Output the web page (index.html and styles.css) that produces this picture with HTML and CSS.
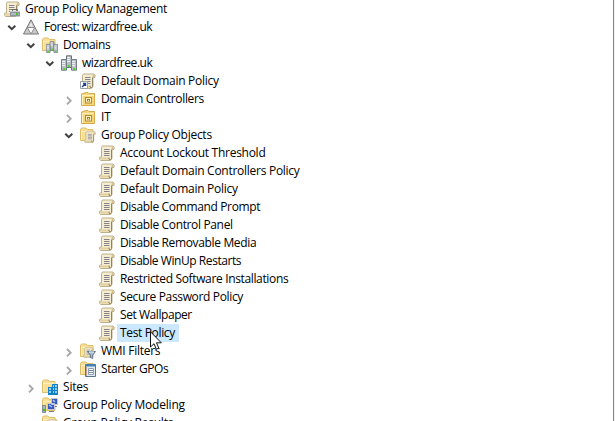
FILE: index.html
```html
<!DOCTYPE html>
<html lang="en">
<head>
<meta charset="utf-8">
<title>Group Policy Management</title>
<link rel="stylesheet" href="styles.css">
</head>
<body>
<svg class="defs" aria-hidden="true">
  <symbol id="open" viewBox="0 0 16 18"><path d="M4.300 7.700L7.800 11.200L11.300 7.700" fill="none" stroke="#404040" stroke-width="2"/></symbol>
  <symbol id="closed" viewBox="0 0 16 18"><path d="M6 7l3.700 3.700L6 14.400" fill="none" stroke="#a6a6a6" stroke-width="1.800"/></symbol>
  <symbol id="scroll" viewBox="0 0 16 16">
    <path d="M4 1H14Q15.800 1.500 15 4.500H13V13Q12.800 15.300 10.500 15.500H1.500Q0 14.500 .8 12H2.500V2.500Q2.700 1 4 1Z" fill="#f6edcf" stroke="#b5a781" stroke-width=".9"/>
    <path d="M12.500 4Q12.300 2 13.500 1.500L14.500 2V4Z" fill="#d2c08a"/>
    <path d="M1 12.500H10V14.500H2Z" fill="#e0d09d"/>
    <path d="M12.500 4.500V13.500Q12 15 10.500 15L10 12.500" fill="none" stroke="#8f8461"/>
    <path d="M5 4.500H10.500M5 6.500H10.500M5 8.500H10.500M5 10.500H10.500" stroke="#83838f"/>
  </symbol>
  <symbol id="folder" viewBox="0 0 16 16">
    <path d="M.5 2.500L1.500 1H6L7.500 2.500H13V13.500H.5Z" fill="#f8df95" stroke="#dfbd69"/>
    <path d="M1 4.500H12.500" stroke="#fff0c2"/>
    <path d="M1.500 5V13" stroke="#fdedbb"/>
  </symbol>
  <symbol id="servers" viewBox="0 0 16 16">
    <path d="M5.500 .8H10.500V12.500H5.500Z" fill="#b7bfc5" stroke="#687178"/>
    <path d="M.5 4.500H5.500V15.200H.5ZM10.500 4.500H15.500V15.200H10.500Z" fill="#b7bfc5" stroke="#727c84"/>
    <path d="M6 2.500H9M6 4.500H9M6 6.500H9M1 6.500H4M1 8.500H4M1 10.500H4M11 6.500H14M11 8.500H14M11 10.500H14" stroke="#eef2f4"/>
    <path d="M7 10h2v2H7zM2 13h2v2H2zM12 13h2v2H12z" fill="#55d42e"/>
  </symbol>
  <symbol id="console" viewBox="0 0 16 16">
    <use href="#scroll"/><path d="M8.500 10V8.500H13.500V10" fill="none" stroke="#62696f"/><path d="M6 10H16V15.500H6Z" fill="#8d959b"/><path d="M6 10.500H16" stroke="#c6ccd0"/><path d="M7 13H15" stroke="#d8dde0"/><path d="M12 12h2v2h-2z" fill="#47c821"/>
  </symbol>
  <symbol id="forest" viewBox="0 0 16 16">
    <path d="M8 .8L15.500 15H.5Z" fill="#c9c9c9" stroke="#777"/>
    <path d="M4.300 8.500H11.700L8 15Z" fill="#fafafa" stroke="#858585" stroke-width=".9"/>
    <path d="M8 3.500L10 7.500H6Z" fill="#eee"/>
  </symbol>
  <symbol id="domains" viewBox="0 0 16 16"><use href="#folder"/><use href="#servers" x="4" y="4" width="12" height="12"/></symbol>
  <symbol id="link" viewBox="0 0 16 16">
    <use href="#scroll"/><path d="M.5 8.500H7.500V15.500H.5Z" fill="#fff" stroke="#98a0aa"/><path d="M2 14L5 11M3 10.500H5.500V13" fill="none" stroke="#1b3f9a" stroke-width="1.400"/>
  </symbol>
  <symbol id="ou" viewBox="0 0 16 16">
    <path d="M1.500 3L6 1.500H8L9 2.500H14.500V14.500H1.500Z" fill="#f5d67b" stroke="#d5ab4b"/><path d="M2 4.500H14M2.500 5V14" stroke="#fff0b5"/>
    <path d="M5 6H12V12.500H5Z" fill="#b08a35"/><path d="M6 7H11V11.500H6Z" fill="#fff0bd"/><path d="M7 8H10V10.500H7Z" fill="#a67f29"/><path d="M8 9H9V10H8Z" fill="#fff4cc"/>
  </symbol>
  <symbol id="objects" viewBox="0 0 16 16"><use href="#folder"/><use href="#scroll" x="4" y="4" width="12" height="12"/></symbol>
  <symbol id="filters" viewBox="0 0 16 16">
    <use href="#folder"/><use href="#scroll" x="3" y="4" width="11" height="11"/>
    <path d="M7.500 8.500H15.500L12.700 12V15.500L10.500 14.500V12Z" fill="#a8bacb" stroke="#65788d"/><path d="M9 9H14" stroke="#e8f2fa"/>
  </symbol>
  <symbol id="starter" viewBox="0 0 16 16">
    <use href="#folder"/><path d="M5.500 3.500H15.500V15.500H5.500Z" fill="#e2ebf2" stroke="#58758b"/><path d="M6 4.500H15" stroke="#3d83b8" stroke-width="2"/><path d="M8.500 7.500H13.500V13.500H8.500Z" fill="#fff" stroke="#8ba0b0"/><path d="M9 9.500H13M9 11.500H13" stroke="#71899c"/><path d="M6 6V15" stroke="#a55a43"/>
  </symbol>
  <symbol id="sites" viewBox="0 0 16 16">
    <use href="#folder"/><path d="M6 8H10V5H16V16H6Z" fill="#1582c7"/><path d="M7 10H9M11 7H12M13 7H15M11 10H12M13 10H15M7 13H9M11 13H12M13 13H15" stroke="#b9e6ff" stroke-width="1.500"/>
  </symbol>
  <symbol id="modeling" viewBox="0 0 16 16">
    <use href="#folder"/><path d="M9.500 1.500H15.500V7.500H9.500ZM5.500 6.500H12.500V12.500H5.500Z" fill="#3657bf" stroke="#c4c8d0"/><path d="M11 3L13 5M7 8L10 10" stroke="#a9cbff" stroke-width="1.500"/><path d="M7 14.500H12M13 9.500H15" stroke="#777e8b"/><path d="M.5 8.500H3.500V15.500H.5Z" fill="#adb5bb" stroke="#7e878e"/><path d="M1 12H3V14H1Z" fill="#42c51f"/>
  </symbol>
</svg>
<main class="tree">
  <div class="row root"><svg class="icon"><use href="#console"/></svg><span class="label snug">Group Policy Management</span></div>
  <div class="row l1"><svg class="arrow"><use href="#open"/></svg><svg class="icon"><use href="#forest"/></svg><span class="label tighter">Forest: wizardfree.uk</span></div>
  <div class="row l2"><svg class="arrow"><use href="#open"/></svg><svg class="icon"><use href="#domains"/></svg><span class="label tight">Domains</span></div>
  <div class="row l3"><svg class="arrow"><use href="#open"/></svg><svg class="icon"><use href="#servers"/></svg><span class="label tighter">wizardfree.uk</span></div>
  <div class="row l4"><span class="arrow"></span><svg class="icon"><use href="#link"/></svg><span class="label snug">Default Domain Policy</span></div>
  <div class="row l4"><svg class="arrow"><use href="#closed"/></svg><svg class="icon"><use href="#ou"/></svg><span class="label tight">Domain Controllers</span></div>
  <div class="row l4"><svg class="arrow"><use href="#closed"/></svg><svg class="icon"><use href="#ou"/></svg><span class="label">IT</span></div>
  <div class="row l4"><svg class="arrow"><use href="#open"/></svg><svg class="icon"><use href="#objects"/></svg><span class="label snug">Group Policy Objects</span></div>
  <div class="row l5"><svg class="icon"><use href="#scroll"/></svg><span class="label snug">Account Lockout Threshold</span></div>
  <div class="row l5"><svg class="icon"><use href="#scroll"/></svg><span class="label snug">Default Domain Controllers Policy</span></div>
  <div class="row l5"><svg class="icon"><use href="#scroll"/></svg><span class="label snug">Default Domain Policy</span></div>
  <div class="row l5"><svg class="icon"><use href="#scroll"/></svg><span class="label tight">Disable Command Prompt</span></div>
  <div class="row l5"><svg class="icon"><use href="#scroll"/></svg><span class="label tight">Disable Control Panel</span></div>
  <div class="row l5"><svg class="icon"><use href="#scroll"/></svg><span class="label tight">Disable Removable Media</span></div>
  <div class="row l5"><svg class="icon"><use href="#scroll"/></svg><span class="label tighter">Disable WinUp Restarts</span></div>
  <div class="row l5"><svg class="icon"><use href="#scroll"/></svg><span class="label tight">Restricted Software Installations</span></div>
  <div class="row l5"><svg class="icon"><use href="#scroll"/></svg><span class="label tight">Secure Password Policy</span></div>
  <div class="row l5"><svg class="icon"><use href="#scroll"/></svg><span class="label tighter">Set Wallpaper</span></div>
  <div class="row l5"><svg class="icon"><use href="#scroll"/></svg><span class="label tight selected">Test Policy</span></div>
  <div class="row l4"><svg class="arrow"><use href="#closed"/></svg><svg class="icon"><use href="#filters"/></svg><span class="label snug">WMI Filters</span></div>
  <div class="row l4"><svg class="arrow"><use href="#closed"/></svg><svg class="icon"><use href="#starter"/></svg><span class="label tighter">Starter GPOs</span></div>
  <div class="row l2"><svg class="arrow"><use href="#closed"/></svg><svg class="icon"><use href="#sites"/></svg><span class="label">Sites</span></div>
  <div class="row l2"><span class="arrow"></span><svg class="icon"><use href="#modeling"/></svg><span class="label">Group Policy Modeling</span></div>
  <div class="row l2"><span class="arrow"></span><svg class="icon"><use href="#objects"/></svg><span class="label">Group Policy Results</span></div>
</main>
<svg class="cursor" viewBox="0 0 12 19"><path d="M.5 .8V16L4 12.700L6.300 18.200L8.800 17.200L6.500 11.800H11.300Z" fill="#fff" stroke="#111"/></svg>
</body>
</html>
```
FILE: styles.css
```css
body {
  margin: 0;
  height: 421px;
  overflow: hidden;
  background: #fff;
  font: 12px/18px "Open Sans", "Noto Sans", sans-serif;
  color: #000;
}
.defs { position: absolute; width: 0; height: 0; }
.tree {
  box-sizing: border-box;
  width: 614px;
  height: 421px;
  overflow: hidden;
  border-right: 1px solid #828790;
  box-shadow: 1px 0 #f0f0f0;
}
.row { display: flex; align-items: center; height: 18px; white-space: nowrap; }
.root { padding-left: 4px; }
.l1 { padding-left: 4px; }
.l2 { padding-left: 23px; }
.l3 { padding-left: 42px; }
.l4 { padding-left: 61px; }
.l5 { padding-left: 99px; }
.arrow { width: 16px; height: 18px; margin-right: 3px; flex: none; }
.icon { width: 16px; height: 16px; flex: none; }
.label { height: 18px; margin-left: 2px; padding: 0 3px; letter-spacing: -0.2px; }
.snug { letter-spacing: -0.27px; }
.tight { letter-spacing: -0.35px; }
.tighter { letter-spacing: -0.44px; }
.selected { padding-right: 4px; background: #cce8ff; }
.cursor { position: absolute; left: 150px; top: 331px; width: 12px; height: 19px; }
```
